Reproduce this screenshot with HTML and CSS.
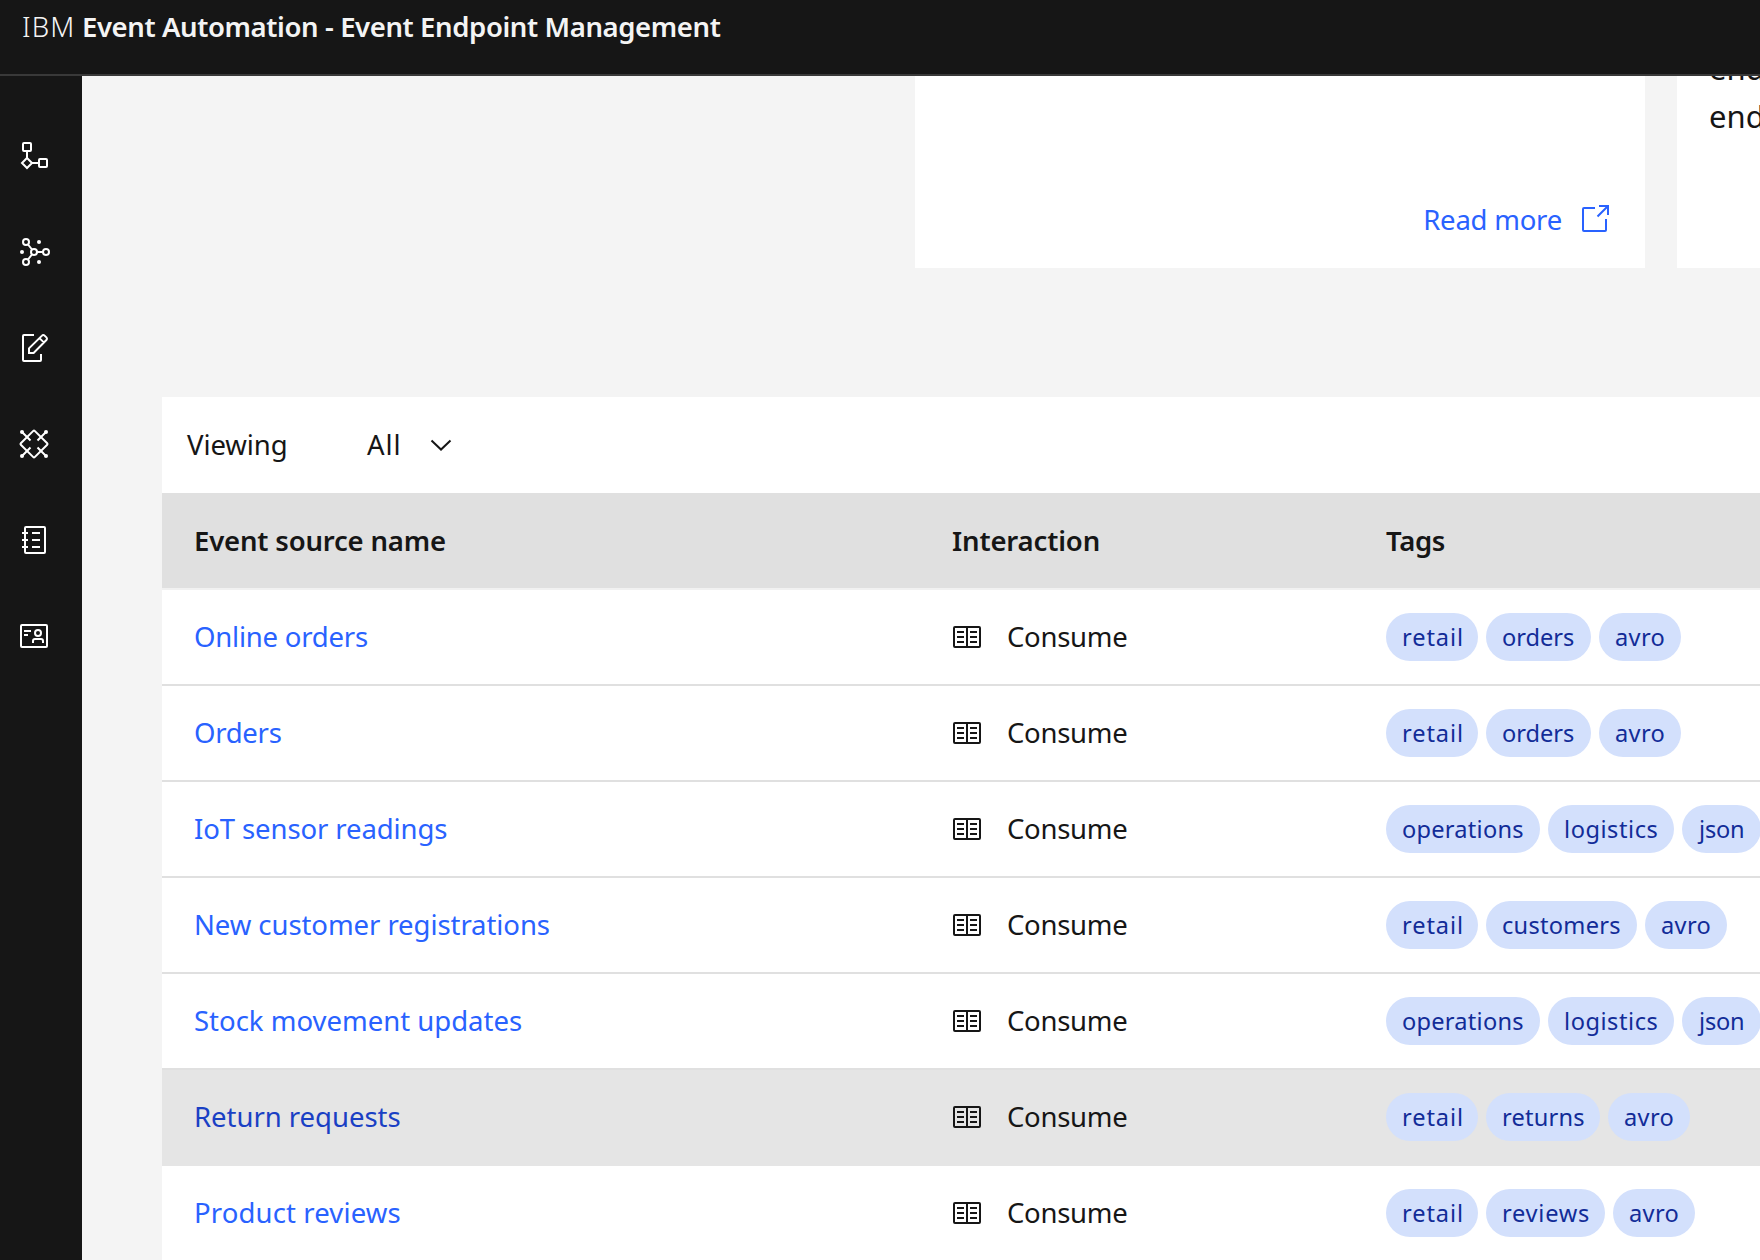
FILE: index.html
```html
<!DOCTYPE html>
<html lang="en">
<head>
<meta charset="utf-8">
<title>IBM Event Automation - Event Endpoint Management</title>
<link rel="stylesheet" href="styles.css">
</head>
<body>
<svg class="defs" aria-hidden="true">
  <symbol id="consume" viewBox="0 0 32 32">
    <rect x="2" y="6" width="26" height="20" rx="1"/>
    <path d="M15 6v20M5 11h7M5 16h7M5 21h7M18 11h7M18 16h7M18 21h7"/>
  </symbol>
</svg>
<header class="header"><span class="brand">IBM</span><span class="product">Event Automation - Event Endpoint Management</span></header>
<div class="shell">
  <nav class="sidebar">
    <svg class="icon" viewBox="0 0 32 32"><rect x="5" y="3" width="8" height="8" rx="1"/><path d="M9 11v7M14 23h7"/><path d="M9 18l5 5-5 5-5-5z"/><rect x="21" y="19" width="8" height="8" rx="1"/></svg>
    <svg class="icon" viewBox="0 0 32 32"><circle cx="8" cy="6" r="3"/><circle cx="16" cy="16" r="3"/><circle cx="28" cy="16" r="3"/><circle cx="8" cy="26" r="3"/><path d="M10 8.500l4 5M10 23.500l4-5M19 16h6"/><g class="solid"><circle cx="21" cy="6" r="2"/><circle cx="4" cy="16" r="2"/><circle cx="21" cy="26" r="2"/></g></svg>
    <svg class="icon" viewBox="0 0 32 32"><path d="M16 3H6a1 1 0 0 0-1 1v24a1 1 0 0 0 1 1h16a1 1 0 0 0 1-1v-6"/><path d="M11 21v-4.600L24 3.600a1.800 1.800 0 0 1 2.600 0l1.800 1.800a1.800 1.800 0 0 1 0 2.600L15.600 21zM21.500 6.100l4.500 4.500"/></svg>
    <svg class="icon" viewBox="0 0 32 32"><path d="M15.300 2.900a1 1 0 0 1 1.400 0l12.500 12.400a1 1 0 0 1 0 1.400L16.700 29.100a1 1 0 0 1-1.400 0L2.800 16.700a1 1 0 0 1 0-1.400z"/><path d="M4 4l8.500 8.500M28 4l-8.500 8.500M4 28l8.500-8.500M28 28l-8.500-8.500"/><g class="solid"><circle cx="4" cy="4" r="2"/><circle cx="28" cy="4" r="2"/><circle cx="4" cy="28" r="2"/><circle cx="28" cy="28" r="2"/></g></svg>
    <svg class="icon" viewBox="0 0 32 32"><rect x="7" y="3" width="20" height="26" rx="1"/><path d="M4 9h6M4 16h6M4 23h6M14 9h8M14 16h8M14 23h8"/></svg>
    <svg class="icon" viewBox="0 0 32 32"><rect x="3" y="5" width="26" height="22" rx="1"/><path d="M6 11h7M6 15h4M15 23v-2a2 2 0 0 1 2-2h6a2 2 0 0 1 2 2v2"/><circle cx="20" cy="13" r="3"/></svg>
  </nav>
  <main class="content">
    <section class="cards">
      <article class="card"><a class="more"><span>Read more</span><svg class="icon launch" viewBox="0 0 32 32"><path d="M16 5H5a1 1 0 0 0-1 1v21a1 1 0 0 0 1 1h21a1 1 0 0 0 1-1V16"/><path d="M20 3h9v9M29 3L18.500 13.500"/></svg></a></article>
      <article class="card card-text"><p>end</p><p>end</p></article>
    </section>
    <section class="catalog">
      <div class="toolbar"><span class="viewing">Viewing</span><span class="all">All</span><svg class="icon chevron" viewBox="0 0 32 32"><path d="M6.500 11.500l9.500 9 9.500-9"/></svg></div>
      <div class="row head"><span class="h-name">Event source name</span><span class="h-int">Interaction</span><span class="h-tags">Tags</span></div>
      <div class="row"><a class="name n-online">Online orders</a><span class="use"><svg class="icon"><use href="#consume"/></svg>Consume</span><span class="tags"><b class="tag t-retail">retail</b><b class="tag t-orders">orders</b><b class="tag t-avro">avro</b></span></div>
      <div class="row"><a class="name n-orders">Orders</a><span class="use"><svg class="icon"><use href="#consume"/></svg>Consume</span><span class="tags"><b class="tag t-retail">retail</b><b class="tag t-orders">orders</b><b class="tag t-avro">avro</b></span></div>
      <div class="row"><a class="name n-iot">IoT sensor readings</a><span class="use"><svg class="icon"><use href="#consume"/></svg>Consume</span><span class="tags"><b class="tag t-operations">operations</b><b class="tag t-logistics">logistics</b><b class="tag t-json">json</b></span></div>
      <div class="row"><a class="name n-customer">New customer registrations</a><span class="use"><svg class="icon"><use href="#consume"/></svg>Consume</span><span class="tags"><b class="tag t-retail">retail</b><b class="tag t-customers">customers</b><b class="tag t-avro">avro</b></span></div>
      <div class="row"><a class="name n-stock">Stock movement updates</a><span class="use"><svg class="icon"><use href="#consume"/></svg>Consume</span><span class="tags"><b class="tag t-operations">operations</b><b class="tag t-logistics">logistics</b><b class="tag t-json">json</b></span></div>
      <div class="row active"><a class="name n-return">Return requests</a><span class="use"><svg class="icon"><use href="#consume"/></svg>Consume</span><span class="tags"><b class="tag t-retail">retail</b><b class="tag t-returns">returns</b><b class="tag t-avro">avro</b></span></div>
      <div class="row"><a class="name n-product">Product reviews</a><span class="use"><svg class="icon"><use href="#consume"/></svg>Consume</span><span class="tags"><b class="tag t-retail">retail</b><b class="tag t-reviews">reviews</b><b class="tag t-avro">avro</b></span></div>
    </section>
  </main>
</div>
</body>
</html>
```
FILE: styles.css
```css
* { box-sizing: border-box; }
body {
  margin: 0; width: 1760px; height: 1260px; overflow: hidden;
  background: #f4f4f4; color: #161616;
  font: 380 27.5px/36px "Noto Sans", sans-serif;
  white-space: nowrap;
}
.defs { display: none; }
.icon { flex: none; width: 32px; height: 32px; fill: none; stroke: currentColor; stroke-width: 2; }
.solid { fill: currentColor; stroke: none; }

.header { display: flex; height: 76px; padding: 9px 0 0 22px; background: #161616; border-bottom: 2px solid #393939; color: #f4f4f4; }
.brand { width: 60px; font-weight: 320; letter-spacing: 1.1px; }
.product { font-weight: 600; letter-spacing: -.39px; }

.shell { display: flex; height: 1184px; }
.sidebar { flex: none; display: flex; flex-direction: column; gap: 64px; width: 82px; padding: 64px 0 0 18px; background: #161616; color: #fff; }
.content { flex: none; width: 1678px; height: 1184px; overflow: hidden; }

.cards { display: flex; gap: 32px; height: 192px; padding-left: 833px; }
.card { flex: none; display: flex; justify-content: flex-end; align-items: flex-end; width: 730px; background: #fff; }
.more { display: flex; gap: 17px; padding: 0 34px 30px 0; color: #2962ff; letter-spacing: -.22px; }
.launch { position: relative; top: 1px; }
.card-text { flex-direction: column; justify-content: flex-start; align-items: flex-start; padding-left: 32px; font-size: 31px; line-height: 48px; }
.card-text p { margin: 0; }
.card-text p:first-child { margin-top: -32px; }

.catalog { width: 1678px; margin: 129px 0 0 80px; background: #fff; }
.toolbar { display: flex; align-items: center; height: 96px; padding-left: 25px; }
.viewing { width: 180px; letter-spacing: -.1px; }
.all { width: 58px; letter-spacing: .9px; }

.row { display: grid; grid-template-columns: 758px 434px 500px; align-items: center; height: 96px; padding-left: 32px; border-bottom: 2px solid #e0e0e0; }
.head { height: 97px; background: #e0e0e0; border-bottom-color: #f1f1f1; font-weight: 600; }
.h-name { letter-spacing: -.18px; }
.h-int { letter-spacing: -.15px; }
.h-tags { letter-spacing: -.3px; }
.name { color: #2962ff; }
.active { background: #e5e5e5; border-bottom-color: #e5e5e5; }
.active .name { color: #1a40c4; }
.n-online { letter-spacing: -.22px; }
.n-orders { letter-spacing: -.28px; }
.n-iot { letter-spacing: -.1px; }
.n-customer { letter-spacing: -.07px; }
.n-return { letter-spacing: -.03px; }
.n-product { letter-spacing: .13px; }
.use { display: flex; align-items: center; gap: 23px; letter-spacing: -.28px; }

.tags { display: flex; gap: 8px; }
.tag { flex: none; height: 48px; padding-left: 16px; border-radius: 24px; background: #d3e0fc; color: #122c98; font-size: 23.6px; font-weight: 380; line-height: 48px; }
.t-retail { width: 92px; letter-spacing: .92px; }
.t-orders { width: 105px; }
.t-avro { width: 82px; letter-spacing: .34px; }
.t-operations { width: 154px; letter-spacing: .25px; }
.t-logistics { width: 126px; letter-spacing: .54px; }
.t-json { width: 79px; padding-left: 17px; letter-spacing: -.2px; }
.t-customers { width: 151px; letter-spacing: .27px; }
.t-returns { width: 114px; letter-spacing: .2px; }
.t-reviews { width: 119px; letter-spacing: .74px; }
```
